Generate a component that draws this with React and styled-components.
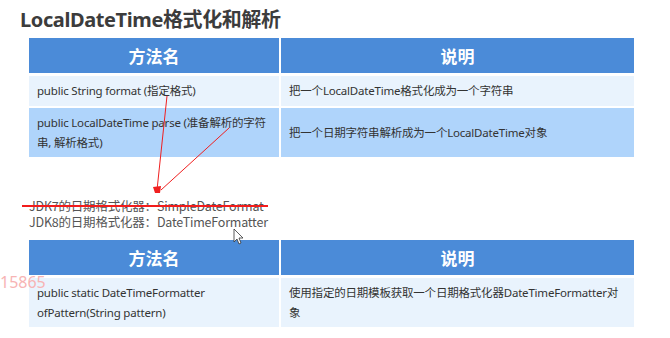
import React from 'react';
import styled, { createGlobalStyle } from 'styled-components';

const Global = createGlobalStyle`
  html, body { margin: 0; padding: 0; background: #fff; }
  body {
    width: 670px;
    height: 338px;
    overflow: hidden;
    font-family: "Noto Sans", "Noto Sans CJK SC", sans-serif;
  }
`;

const Page = styled.div`
  position: relative;
  width: 670px;
  height: 338px;
  padding: 7px 36px 0 29px;
  box-sizing: border-box;
  display: flex;
  flex-direction: column;
`;

const Title = styled.h1`
  margin: 0 0 6px -9px;
  font-family: "Noto Sans", "Noto Sans CJK SC", sans-serif;
  font-size: 20px;
  line-height: 25px;
  font-weight: 700;
  color: #3c3c3c;
  letter-spacing: -0.4px;
`;

const Table = styled.div`
  display: grid;
  grid-template-columns: 250px 1fr;
  column-gap: 2px;
  row-gap: 2px;
`;

const Head = styled.div`
  height: 35px;
  background: #4b8bd8;
  color: #fff;
  font-family: "Noto Sans CJK SC", sans-serif;
  font-weight: 700;
  font-size: 17px;
  display: flex;
  align-items: center;
  justify-content: center;
  margin-bottom: 1px;
`;

const Cell = styled.div`
  height: ${p => p.$h}px;
  background: ${p => (p.$dark ? '#afd4fb' : '#e9f3fd')};
  color: #333;
  font-family: "Noto Sans", "Noto Sans CJK SC", sans-serif;
  font-size: 11.5px;
  line-height: 19.5px;
  padding: 0 8px;
  display: flex;
  align-items: center;
  box-sizing: border-box;
  letter-spacing: -0.2px;
`;

const Notes = styled.div`
  margin: 41px 0 8px 0;
  font-family: "Noto Sans CJK SC", sans-serif;
  font-size: 12.5px;
  line-height: 16px;
  color: #555;
  letter-spacing: -0.2px;
  display: flex;
  flex-direction: column;
  height: 34px;
`;

const Struck = styled.span`
  position: relative;
  &::after {
    content: '';
    position: absolute;
    left: -7px;
    width: 246px;
    top: 7px;
    height: 2px;
    background: #f21c1c;
  }
`;

const Overlay = styled.svg`
  position: absolute;
  left: 0;
  top: 0;
  pointer-events: none;
`;

const Watermark = styled.div`
  position: absolute;
  left: 0;
  top: 271px;
  font-family: "Noto Sans", sans-serif;
  font-size: 16px;
  color: #f7b4b4;
`;

export default function App() {
  return (
    <Page>
      <Global />
      <Title>LocalDateTime格式化和解析</Title>
      <Table>
        <Head>方法名</Head>
        <Head>说明</Head>
        <Cell $h={30}>public String format (指定格式)</Cell>
        <Cell $h={30}>把一个LocalDateTime格式化成为一个字符串</Cell>
        <Cell $h={49} $dark>public LocalDateTime parse (准备解析的字符串, 解析格式)</Cell>
        <Cell $h={49} $dark>把一个日期字符串解析成为一个LocalDateTime对象</Cell>
      </Table>
      <Notes>
        <Struck>JDK7的日期格式化器：SimpleDateFormat</Struck>
        <span>JDK8的日期格式化器：DateTimeFormatter</span>
      </Notes>
      <Table>
        <Head>方法名</Head>
        <Head>说明</Head>
        <Cell $h={49}>public static DateTimeFormatter ofPattern(String pattern)</Cell>
        <Cell $h={49}>使用指定的日期模板获取一个日期格式化器DateTimeFormatter对象</Cell>
      </Table>
      <Watermark>15865</Watermark>
      <Overlay width="670" height="338">
        <line x1="167" y1="96" x2="157" y2="190" stroke="#f02020" strokeWidth="1" />
        <line x1="229" y1="128" x2="161" y2="190" stroke="#f02020" strokeWidth="1" />
        <polygon points="153,187 161,186 160,193 155,193" fill="#f02020" />
        <path d="M234 229 L234 242 L237 239 L239 244 L241 243 L239 238 L243 238 Z" fill="#fff" stroke="#333" strokeWidth="0.8" />
      </Overlay>
    </Page>
  );
}
